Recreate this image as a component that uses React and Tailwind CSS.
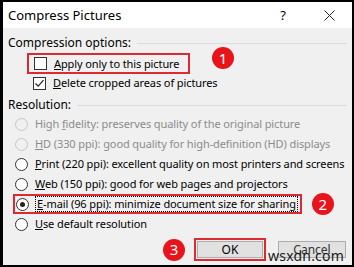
import React from 'react';

const FONT = { fontFamily: '"Noto Sans", "Open Sans", Arial, sans-serif' };

// small numbered red marker
function Badge({ n }) {
  return (
    <div className="w-[22px] h-[22px] rounded-full bg-[#e8141b] text-white text-[15px] leading-none flex items-center justify-center shrink-0 tracking-normal">
      {n}
    </div>
  );
}

function Checkbox({ checked }) {
  return (
    <div className="w-[13px] h-[13px] border border-[#333] bg-white flex items-center justify-center shrink-0">
      {checked && (
        <svg width="11" height="11" viewBox="0 0 11 11">
          <path d="M1.5 5.5 L4.2 8.2 L9.5 2.2" fill="none" stroke="#222" strokeWidth="1.2" />
        </svg>
      )}
    </div>
  );
}

function Radio({ selected, disabled }) {
  return (
    <div
      className={`w-[13px] h-[13px] rounded-full border flex items-center justify-center shrink-0 ${
        disabled ? 'border-[#c6c6c6] bg-[#f0f0f0]' : 'border-[#333] bg-white'
      }`}
    >
      {selected && <div className="w-[5px] h-[5px] rounded-full bg-[#222]" />}
    </div>
  );
}

function GroupLabel({ text }) {
  return (
    <div className="flex items-center h-[18px] pl-[5px] pr-[5px]">
      <span>{text}</span>
      <div className="flex-1 h-px bg-[#dcdcdc] ml-[6px]" />
    </div>
  );
}

function RadioRow({ accel, rest, disabled, selected, highlight, badge }) {
  const label = (
    <span className={disabled ? 'text-[#8c8c8c]' : 'text-black'}>
      <span className="underline">{accel}</span>
      {rest}
    </span>
  );
  return (
    <div className="flex items-center h-[20px] pl-[12px]">
      {highlight ? (
        <div className="flex items-center gap-[6px] border-2 border-[#dc2a30] h-[20px] pl-[1px] pr-[2px] ml-[-2px]">
          <Radio selected={selected} />
          <span className="border border-dotted border-black leading-[14px] px-[1px]">{label}</span>
        </div>
      ) : (
        <div className="flex items-center gap-[7px]">
          <Radio selected={selected} disabled={disabled} />
          {label}
        </div>
      )}
      {badge && (
        <div className="ml-[10px]">
          <Badge n={badge} />
        </div>
      )}
    </div>
  );
}

export default function App() {
  return (
    <div className="w-[354px] h-[267px] bg-black pl-[3px] pr-[2px] pt-[2px] pb-[2px]" style={FONT}>
      <div className="h-full bg-[#f0f0f0] flex flex-col relative text-[11px] leading-[14px] tracking-[-0.1px] text-black overflow-hidden whitespace-nowrap">
        {/* title bar */}
        <div className="h-[26px] bg-white flex items-center pl-[5px] pr-[17px] shrink-0 tracking-normal">
          <span className="text-[13px]">Compress Pictures</span>
          <span className="ml-auto text-[13px] mr-[38px]">?</span>
          <svg width="11" height="11" viewBox="0 0 11 11">
            <path d="M0.5 0.5 L10.5 10.5 M10.5 0.5 L0.5 10.5" stroke="#222" strokeWidth="1" />
          </svg>
        </div>

        <div className="mt-[6px] text-[12px] tracking-normal">
          <GroupLabel text="Compression options:" />
        </div>

        <div className="flex items-center h-[21px] pl-[24px] mt-[1px]">
          <div className="flex items-center gap-[7px] border-2 border-[#dc2a30] h-[21px] w-[163px] pl-[5px]">
            <Checkbox />
            <span>
              <span className="underline">A</span>pply only to this picture
            </span>
          </div>
          <div className="ml-[22px] mt-[-11px]">
            <Badge n="1" />
          </div>
        </div>

        <div className="flex items-center h-[18px] pl-[30px] gap-[7px]">
          <Checkbox checked />
          <span>
            <span className="underline">D</span>elete cropped areas of pictures
          </span>
        </div>

        <div className="mt-[4px] text-[12px] tracking-normal">
          <GroupLabel text="Resolution:" />
        </div>

        <RadioRow disabled accel="" rest={<>High <span className="underline">f</span>idelity: preserves quality of the original picture</>} />
        <RadioRow disabled accel="H" rest="D (330 ppi): good quality for high-definition (HD) displays" />
        <RadioRow accel="P" rest="rint (220 ppi): excellent quality on most printers and screens" />
        <RadioRow accel="W" rest="eb (150 ppi): good for web pages and projectors" />
        <RadioRow selected highlight badge="2" accel="E" rest="-mail (96 ppi): minimize document size for sharing" />
        <RadioRow accel="U" rest="se default resolution" />

        {/* buttons */}
        <div className="flex items-center justify-end mt-auto mb-[4px] pr-[6px] gap-[12px] tracking-normal">
          <Badge n="3" />
          <div className="border-2 border-[#dc2a30] p-[1px] ml-[-3px]">
            <div className="w-[66px] h-[17px] bg-[#e1e1e1] border border-[#adadad] flex items-center justify-center text-[12px]">
              OK
            </div>
          </div>
          <div className="w-[68px] h-[17px] bg-[#e1e1e1] border border-[#adadad] flex items-center justify-center text-[12px] text-[#333]">
            Cancel
          </div>
        </div>

        {/* watermark */}
        <div className="absolute right-[8px] bottom-[1px] text-[14px] leading-[16px] text-[#1a1a1a] tracking-[0.2px]">wsxdn.com</div>
      </div>
    </div>
  );
}
